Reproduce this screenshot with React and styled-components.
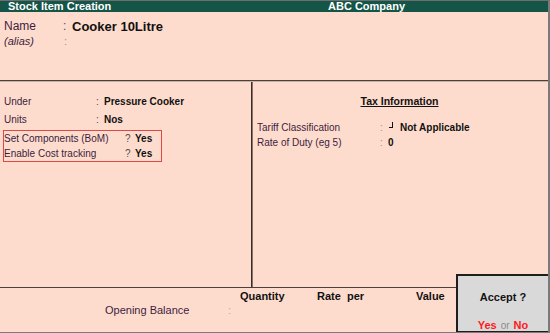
import React from "react";
import styled, { createGlobalStyle } from "styled-components";

const GlobalStyle = createGlobalStyle`
  html, body { margin: 0; padding: 0; background: #fedccd; }
  body { font-family: "Liberation Sans", Arial, sans-serif; color: #111; }
`;

const Screen = styled.div`
  position: relative;
  width: 550px;
  height: 333px;
  box-sizing: border-box;
  display: flex;
  flex-direction: column;
  background: #fedccd;
  border-top: 1px solid #6e6e6e;
  border-right: 2px solid #7a7a7a;
  border-bottom: 1px solid #7a7a7a;
  overflow: hidden;
`;

const TitleBar = styled.div`
  height: 11px;
  display: flex;
  background: #145548;
  color: #fff;
  font-size: 11px;
  font-weight: bold;
  line-height: 11px;
  white-space: nowrap;
`;

const Title = styled.span`
  width: 320px;
  padding-left: 8px;
`;

const NameSection = styled.div`
  height: 69px;
  box-sizing: border-box;
  padding: 7px 0 0 4px;
  border-bottom: 1px solid #4d4038;
`;

const Middle = styled.div`
  flex: 1;
  display: grid;
  grid-template-columns: 252px 1fr;
  border-top: 1px solid #c8b0a4;
  border-bottom: 1px solid #4d4038;
`;

const LeftPanel = styled.div`
  padding: 11px 0 0 3px;
  border-right: 1px solid #3a2e2a;
`;

const RightPanel = styled.div`
  padding: 12px 0 0 4px;
  border-left: 1px solid #8a7468;
`;

const Row = styled.div`
  display: grid;
  grid-template-columns: ${(p) => p.$label}px ${(p) => p.$sep}px auto;
  font-size: ${(p) => p.$size || 10}px;
  line-height: ${(p) => p.$lh || 15}px;
  padding-left: ${(p) => p.$indent || 0}px;
  white-space: nowrap;
`;

const Label = styled.span`
  color: #3d1d3d;
  font-style: ${(p) => (p.$italic ? "italic" : "normal")};
`;

const Sep = styled.span`
  color: ${(p) => (p.$light ? "#a89088" : "#5a4a4a")};
`;

const Value = styled.span`
  font-weight: bold;
  color: #111;
  font-size: ${(p) => p.$size || 10}px;
`;

const Highlight = styled.div`
  width: 159px;
  box-sizing: border-box;
  margin-top: 1px;
  border: 1px solid #e04848;
`;

const Heading = styled.div`
  text-align: center;
  padding-right: 6px;
  font-size: 10.5px;
  font-weight: bold;
  line-height: 14px;
  margin-bottom: 12px;
  span { text-decoration: underline; text-underline-offset: 1px; }
`;

const Corner = styled.span`
  display: inline-block;
  width: 3px;
  height: 5px;
  margin: 0 7px 0 1px;
  vertical-align: 3px;
  border-right: 1.5px solid #111;
  border-bottom: 1px solid #111;
`;

const Bottom = styled.div`
  height: 44px;
  display: grid;
  grid-template-columns: 105px 123px 12px 77px 99px 1fr;
  grid-template-rows: 14px 14px;
  padding-top: 1px;
  box-sizing: border-box;
  font-size: 11px;
  line-height: 14px;
  white-space: nowrap;
`;

const ColHead = styled.span`
  font-weight: bold;
  grid-column: ${(p) => p.$col};
  grid-row: 1;
`;

const BottomLabel = styled.span`
  grid-column: 2;
  grid-row: 2;
  color: #3d1d3d;
`;

const BottomSep = styled.span`
  grid-column: 3;
  grid-row: 2;
  color: #b8a8a0;
`;

const AcceptBox = styled.div`
  position: absolute;
  right: -2px;
  bottom: -1px;
  width: 94px;
  height: 59px;
  box-sizing: border-box;
  background: #d9d9d9;
  border: 2px solid #1e1e1e;
  display: flex;
  flex-direction: column;
  justify-content: space-between;
  align-items: center;
  padding-top: 14px;
  font-size: 11px;
  line-height: 14px;
  font-weight: bold;
`;

const Choices = styled.span`
  margin-bottom: -2px;
`;

const Choice = styled.span`
  color: #ff1a1a;
`;

const Or = styled.span`
  color: #8c8c8c;
  font-weight: normal;
  font-size: 10px;
  margin: 0 4px;
`;

export default function App() {
  return (
    <>
      <GlobalStyle />
      <Screen>
        <TitleBar>
          <Title>Stock Item Creation</Title>
          <span>ABC Company</span>
        </TitleBar>

        <NameSection>
          <Row $label={59} $sep={9} $size={12} $lh={15}>
            <Label>Name</Label>
            <Sep>:</Sep>
            <Value $size={13}>Cooker 10Litre</Value>
          </Row>
          <Row $label={60} $sep={9} $size={11} $lh={14}>
            <Label $italic>(alias)</Label>
            <Sep $light>:</Sep>
            <span />
          </Row>
        </NameSection>

        <Middle>
          <LeftPanel>
            <Row $label={92} $sep={8} $lh={18} $indent={1}>
              <Label>Under</Label>
              <Sep>:</Sep>
              <Value>Pressure Cooker</Value>
            </Row>
            <Row $label={92} $sep={8} $lh={18} $indent={1}>
              <Label>Units</Label>
              <Sep>:</Sep>
              <Value>Nos</Value>
            </Row>
            <Highlight>
              <Row $label={121} $sep={10}>
                <Label>Set Components (BoM)</Label>
                <Sep>?</Sep>
                <Value>Yes</Value>
              </Row>
              <Row $label={121} $sep={10}>
                <Label>Enable Cost tracking</Label>
                <Sep>?</Sep>
                <Value>Yes</Value>
              </Row>
            </Highlight>
          </LeftPanel>

          <RightPanel>
            <Heading><span>Tax Information</span></Heading>
            <Row $label={123} $sep={8}>
              <Label>Tariff Classification</Label>
              <Sep $light>:</Sep>
              <Value><Corner />Not Applicable</Value>
            </Row>
            <Row $label={123} $sep={8}>
              <Label>Rate of Duty (eg 5)</Label>
              <Sep $light>:</Sep>
              <Value>0</Value>
            </Row>
          </RightPanel>
        </Middle>

        <Bottom>
          <ColHead $col={4}>Quantity</ColHead>
          <ColHead $col={5}>Rate&nbsp; per</ColHead>
          <ColHead $col={6}>Value</ColHead>
          <BottomLabel>Opening Balance</BottomLabel>
          <BottomSep>:</BottomSep>
        </Bottom>

        <AcceptBox>
          <span>Accept ?</span>
          <Choices>
            <Choice>Yes</Choice>
            <Or>or</Or>
            <Choice>No</Choice>
          </Choices>
        </AcceptBox>
      </Screen>
    </>
  );
}
